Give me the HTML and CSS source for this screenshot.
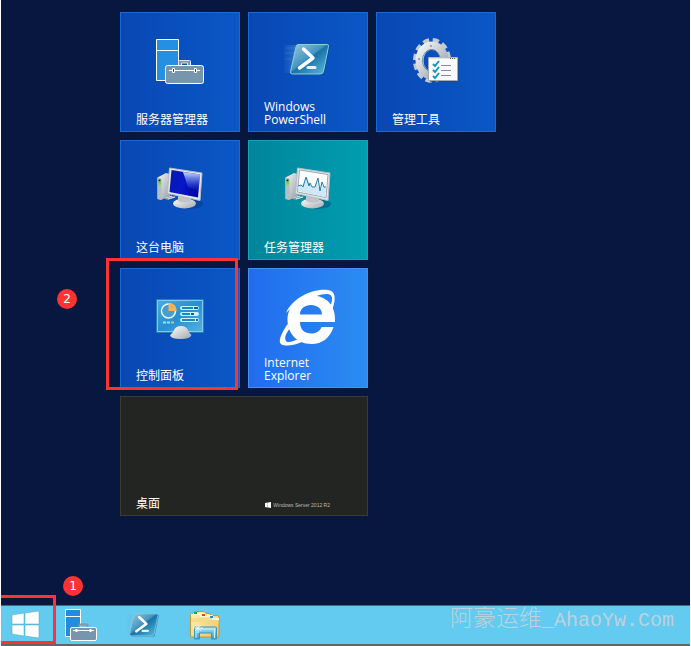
FILE: index.html
```html
<!DOCTYPE html>
<html lang="zh-CN">
<head>
<meta charset="utf-8">
<title>Windows Server</title>
<link rel="stylesheet" href="styles.css">
</head>
<body>
<svg class="defs" aria-hidden="true">
  <defs>
    <linearGradient id="ps" x1="0" y1="0" x2="1" y2="1"><stop offset="0" stop-color="#9ac9dc"/><stop offset=".45" stop-color="#4596c2"/><stop offset=".5" stop-color="#1773aa"/><stop offset="1" stop-color="#5fc0dc"/></linearGradient>
    <linearGradient id="trail"><stop offset="0" stop-color="#65aee5" stop-opacity=".1"/><stop offset="1" stop-color="#75b9df" stop-opacity=".75"/></linearGradient>
    <linearGradient id="metal" x1="0" y1="0" x2="1" y2="1"><stop offset="0" stop-color="#f4f6f7"/><stop offset=".5" stop-color="#c4cbd1"/><stop offset="1" stop-color="#929ba4"/></linearGradient>
    <linearGradient id="base" x1="0" y1="0" x2="1" y2="1"><stop offset="0" stop-color="#fff"/><stop offset="1" stop-color="#a3a7ab"/></linearGradient>
    <linearGradient id="screen" x1="0" y1="0" x2="1" y2=".3"><stop offset="0" stop-color="#0619a8"/><stop offset=".5" stop-color="#0817c8"/><stop offset="1" stop-color="#0009a8"/></linearGradient>
    <linearGradient id="shine" x1="0" y1="0" x2="0" y2="1"><stop offset="0" stop-color="#cbdcff"/><stop offset="1" stop-color="#315be4" stop-opacity="0"/></linearGradient>
    <linearGradient id="panel" x1="0" y1="0" x2="1" y2="1"><stop offset="0" stop-color="#4eaddd"/><stop offset=".5" stop-color="#278fd1"/><stop offset="1" stop-color="#54b5e4"/></linearGradient>
    <linearGradient id="folder" x1="0" y1="0" x2="1" y2="1"><stop offset="0" stop-color="#fff2b5"/><stop offset="1" stop-color="#edc763"/></linearGradient>
    <linearGradient id="glass" x1="0" y1="0" x2="0" y2="1"><stop offset="0" stop-color="#a9e0f5"/><stop offset="1" stop-color="#3e9ccc"/></linearGradient>
  </defs>
  <symbol id="powershell" viewBox="0 0 64 64">
    <path d="M8 17h15l-8 28H8z" fill="url(#trail)" opacity=".5"/>
    <path d="M10 20h9M9 25h9M9 31h7" stroke="#83bdea" stroke-opacity=".2"/>
    <path d="M23 18h31l-6 29H17z" fill="#063d85" opacity=".5"/>
    <path d="M22 16.500h29q2 0 1.500 2l-5 25q-.5 2.500-3 2.500h-28q-2.500 0-2-2.500l5.500-24.500q.5-2.500 2-2.500z" fill="url(#ps)" stroke="#8bd0dd"/>
    <path d="M27.500 21 37 30 23.500 40" fill="none" stroke="#fff" stroke-width="3.500" stroke-linecap="round" stroke-linejoin="round"/>
    <path d="M32 39.500h7" stroke="#e3f5fa" stroke-width="3" stroke-linecap="round"/>
  </symbol>
  <symbol id="computer" viewBox="0 0 64 64">
    <ellipse cx="41" cy="48" rx="14" ry="5" fill="#002f68" opacity=".35"/>
    <path d="M16 42l8-2 4 1-9 3z" fill="#8b9298"/>
    <path d="M17 42l7-2M20 43l7-2" stroke="#eee"/>
    <path d="M9.500 21.500 18 17l4 1v22l-9 4-3.500-1z" fill="url(#metal)"/>
    <path d="M13.500 22.500v21L9.500 43V21.500z" fill="#b8bdc0"/>
    <path d="M10.500 23.500h2v2h-2z" fill="#222"/><path d="M10.500 25.500h2.500v3h-2.500z" fill="#62df16"/>
    <path d="M32 40l10 1 1 6-12 1z" fill="#aeb5bc"/>
    <ellipse cx="36.500" cy="47.500" rx="11.500" ry="5" fill="url(#base)"/>
    <path d="M30 45q7 3 13 0v-4l-13-2z" fill="#bfc5ca"/>
    <path d="m21.500 12 32.500 5-2 27.500-32.500-7z" fill="#e6e8e9" stroke="#b6bcc1"/>
  </symbol>
</svg>

<main class="start">
  <div class="tiles">
    <a class="tile" href="#server-manager">
      <svg class="tile-icon" viewBox="0 0 64 64" aria-hidden="true">
        <path d="M8.500 11.500h22v41h-22zM8.500 22.500h22" fill="#2590e2" stroke="#fff"/>
        <path d="M30.500 37v-3.500q0-1 1-1h10q1 0 1 1V37" fill="#7899ae" stroke="#dce6ee"/><path d="M33.500 37v-2h6v2" fill="#0b53bd" stroke="#dce6ee"/>
        <rect x="17.500" y="37.500" width="38" height="18" rx="2" fill="#7596ac" stroke="#fff"/>
        <path d="M21 42.500h31" stroke="#fff"/><path d="M24.500 40.500h2v4h-2zM46.500 40.500h2v4h-2z" fill="#0b53bd" stroke="#fff"/>
      </svg>
      <span class="tile-label">服务器管理器</span>
    </a>
    <a class="tile" href="#powershell">
      <svg class="tile-icon" aria-hidden="true"><use href="#powershell"/></svg>
      <span class="tile-label">Windows<br>PowerShell</span>
    </a>
    <a class="tile" href="#tools">
      <svg class="tile-icon" viewBox="0 0 64 64" aria-hidden="true">
        <ellipse cx="28" cy="32.500" rx="16.500" ry="20" fill="none" stroke="#c3cad1" stroke-width="5" stroke-dasharray="6 3.600"/>
        <ellipse cx="28" cy="32.500" rx="12.500" ry="15" fill="none" stroke="url(#metal)" stroke-width="8"/>
        <ellipse cx="27.500" cy="32.500" rx="9" ry="11" fill="none" stroke="#71899e"/>
        <circle cx="27" cy="18" r="1" fill="#8296a8"/><circle cx="15" cy="31" r="1" fill="#8296a8"/>
        <path d="M26 31h29v23.500H26z" fill="#234978" opacity=".6"/>
        <path d="M24.500 29.500h29v23h-29z" fill="#f8fafc" stroke="#a6a9ad"/><path d="M25 30h28" stroke="#c8cdd2"/><path d="M46 30.500h6" stroke="#555" stroke-dasharray="1 1"/>
        <path d="m29 36 2 2 4-5M29 42l2 2 4-5M29 48l2 2 4-5" fill="none" stroke="#1797bf" stroke-width="2"/>
        <path d="M37 37.500h10M37 42.500h10M37 47.500h10" stroke="#8d86ad"/>
      </svg>
      <span class="tile-label">管理工具</span>
    </a>
    <a class="tile first" href="#computer">
      <svg class="tile-icon" viewBox="0 0 64 64" aria-hidden="true">
        <use href="#computer"/>
        <path d="M23.500 14 52 18.500l-2 23L21.500 36z" fill="url(#screen)"/>
        <path d="m35 16 17 2.500-1 17L40 31z" fill="url(#shine)"/>
      </svg>
      <span class="tile-label">这台电脑</span>
    </a>
    <a class="tile teal" href="#task-manager">
      <svg class="tile-icon" viewBox="0 0 64 64" aria-hidden="true">
        <use href="#computer"/>
        <path d="M23.500 14 52 18.500l-2 23L21.500 36z" fill="#fafdff" stroke="#9caab3"/>
        <path d="m22 30 5-2 4-7 4 10 3 1 3-7 3 11 3-7 3 3-1 9-27-6z" fill="#cee8f7"/>
        <path d="m22 30 3-1 2 2 3-10 3 9 1-3 2 4h3l3-9 2 13 2-9 2 5h2" fill="none" stroke="#237caa"/>
      </svg>
      <span class="tile-label">任务管理器</span>
    </a>
    <a class="tile first" href="#control-panel">
      <svg class="tile-icon" viewBox="0 0 64 64" aria-hidden="true">
        <path d="M8.500 15.500h47v33h-47z" fill="url(#panel)" stroke="#267fb5"/><path d="M9.500 16.500h45v31h-45z" fill="none" stroke="#81c9e9"/>
        <circle cx="20.500" cy="27" r="7" fill="#439fd4" stroke="#e8f8ff" stroke-width="1.500"/><path d="M20.500 27v-8q8 0 8 8z" fill="#ffb24c"/>
        <path d="M34 24h15M34 30h15M34 36h15" stroke="#c6f3ff" stroke-width="4" stroke-linecap="round"/>
        <path d="M34 24h11M34 30h8M34 36h13" stroke="#118bc2" stroke-width="2"/><path d="M46 24h4M43 30h3M48 36h2" stroke="#175b9e" stroke-width="2"/>
        <path d="M15 38.500h3M19 38.500h3" stroke="#8be8ff" stroke-width="2"/><path d="M23 38.500h3" stroke="#ffb24c" stroke-width="2"/>
        <path d="M22 51q3-2 4-5 2-4 7-4t7 4q1 3 3.500 5-1 4-11 4T22 51z" fill="url(#base)"/>
      </svg>
      <span class="tile-label">控制面板</span>
      <span class="highlight"></span>
      <span class="badge badge-tile">2</span>
    </a>
    <a class="tile azure" href="#ie">
      <svg class="tile-icon" viewBox="0 0 64 64" aria-hidden="true">
        <path fill="#fff" fill-rule="evenodd" d="M59 38H24c0 8 5 11.500 11.500 11.500 5 0 8.500-2.500 10-6.500h12C54 54 46 60 35.500 60 21 60 11.500 49 11.500 36s10-24.500 24-24.500C51 11.500 60 22 59 38zM24 30.500h22c0-6-5-9.500-11-9.500s-11 3.500-11 9.500z"/>
        <path fill="#fff" d="M10 29C17 13 38 4 52 6c8 1 8 9 4.500 19l-2-3c2.500-7 2.500-12-3.500-12-5 0-10 1.500-15 4-8 1-17 6-26 15z"/>
        <path fill="#fff" d="M11.500 40C5 50 1.500 58 5.500 60.500c5 2.500 15 .5 23-4l-4-3C17 58 11.500 59 10 57c-2-3 0-8 3.500-12z"/>
      </svg>
      <span class="tile-label">Internet<br>Explorer</span>
    </a>
    <a class="tile desktop" href="#desktop">
      <span class="tile-label">桌面</span>
      <span class="edition">
        <svg class="edition-logo" viewBox="0 0 27 27" aria-hidden="true"><path fill="#fff" d="M0 4l12-2v11H0zM13 2l14-2v13H13zM0 14h12v11L0 23zM13 14h14v13l-14-2z"/></svg>
        <span>Windows Server 2012 R2</span>
      </span>
    </a>
  </div>
</main>

<footer class="taskbar">
  <button class="start-button" type="button" aria-label="开始">
    <svg class="start-logo" viewBox="0 0 27 27" aria-hidden="true"><path fill="#fff" stroke="#4da5be" stroke-width=".5" d="M0 4l12-2v11H0zM13 2l14-2v13H13zM0 14h12v11L0 23zM13 14h14v13l-14-2z"/></svg>
    <span class="badge badge-start">1</span>
  </button>
  <button class="task" type="button" aria-label="服务器管理器">
    <svg class="task-icon" viewBox="0 0 32 32" aria-hidden="true">
      <path d="M.5.500h15v27H.500zM.5 7.500h15" fill="#218ddd" stroke="#fff"/>
      <path d="M14.500 18v-2.500h8V18" fill="none" stroke="#8498a5" stroke-width="2"/>
      <rect x="5.500" y="18.500" width="26" height="13" rx="1.500" fill="#7596ac" stroke="#fff"/>
      <path d="M8 21.500h21" stroke="#fff"/><path d="M11.500 20v3M25.500 20v3" stroke="#fff" stroke-width="2"/>
    </svg>
  </button>
  <button class="task" type="button" aria-label="Windows PowerShell">
    <svg class="task-icon" viewBox="11 10 43 43" aria-hidden="true"><use href="#powershell" width="64" height="64"/></svg>
  </button>
  <button class="task" type="button" aria-label="文件资源管理器">
    <svg class="task-icon" viewBox="0 0 32 32" aria-hidden="true">
      <path d="M1.500 28V5.500l1-1H4l1-2h10l2 2h4l1 2h7l1 2V28z" fill="url(#folder)" stroke="#c4963b"/>
      <path d="M4 5h11l2 2h-3M11 7h12l1 3h6" fill="none" stroke="#fff8d6" stroke-width="2"/>
      <path d="M5 4h3" stroke="#16a643" stroke-width="2"/><path d="M13 6h3" stroke="#d84533" stroke-width="2"/><path d="M21 8h3" stroke="#238bd7" stroke-width="2"/>
      <path d="M2 10h16l2 2h10M2 12h15l2 2h11" fill="none" stroke="#efd27a"/>
      <path d="M5.500 30V19q0-1 1-1h20q1 0 1 1v11h-5v-6h-12v6z" fill="url(#glass)" stroke="#3b94bd"/>
      <path d="M7 20h19M7 20v9M25.500 20v9" stroke="#c8f1ff"/>
      <path d="M9 14v10M4 19h10M6 16l6 6M12 16l-6 6" stroke="#fff" stroke-width=".7"/>
    </svg>
  </button>
  <p class="watermark"><span class="watermark-name">阿豪运维</span>_AhaoYw.Com</p>
</footer>
</body>
</html>
```

FILE: styles.css
```css
* { box-sizing: border-box; }

body {
  display: flex;
  flex-direction: column;
  min-height: 100vh;
  margin: 0;
  border-right: 1px solid #fff;
  border-left: 1px solid #fff;
  background: #071740;
  color: #fff;
  font: 12px/13px "Open Sans", "Noto Sans CJK SC", sans-serif;
}

.defs { position: absolute; width: 0; height: 0; }

.start { flex: 1; padding: 12px 0 12px 119px; }

.tiles {
  display: grid;
  grid-template-columns: repeat(3, 120px);
  grid-auto-rows: 120px;
  gap: 8px;
}

.tile {
  position: relative;
  display: flex;
  flex-direction: column;
  justify-content: space-between;
  padding: 15px 15px 5px;
  border: 1px solid #1f68cc;
  background: linear-gradient(to right, #0947b4, #0958c6);
  color: #fff;
  text-decoration: none;
}

.first { grid-column: 1; }
.teal { border-color: #18a4b3; background: linear-gradient(to right, #01849c, #009eaf); }
.azure { border-color: #4690f3; background: linear-gradient(to right, #216cee, #2b8cf2); }

.desktop {
  grid-column: 1 / span 2;
  flex-direction: row;
  align-items: flex-end;
  border-color: #3a3d37;
  background: #232522;
}

.tile-icon { align-self: center; width: 64px; height: 64px; }

.edition {
  display: flex;
  align-items: center;
  gap: 2px;
  margin-right: 22px;
  color: #bbb;
  font: 5px/10px "Liberation Sans", sans-serif;
  white-space: nowrap;
}

.edition-logo { width: 6px; height: 6px; }

.highlight {
  position: absolute;
  top: -11px;
  left: -15px;
  width: 132px;
  height: 132px;
  border: 3px solid #ff3432;
}

.badge {
  position: absolute;
  width: 20px;
  height: 20px;
  border-radius: 50%;
  background: #ff3432;
  color: #fff;
  font: 12px/20px "DejaVu Sans", sans-serif;
  text-align: center;
}

.badge-tile { top: 20px; left: -64px; }
.badge-start { top: -22px; left: 62px; }

.taskbar {
  display: flex;
  align-items: center;
  height: 41px;
  border-top: 1px solid #4d6580;
  border-bottom: 2px solid #626669;
  background: #63caf0;
}

.start-button {
  position: relative;
  align-self: flex-end;
  display: flex;
  align-items: center;
  width: 55px;
  height: 49px;
  padding: 10px 0 0 11px;
  border: solid #ff3432;
  border-width: 3px 3px 3px 0;
  background: none;
}

.start-logo { width: 27px; height: 27px; overflow: visible; }

.task {
  display: flex;
  justify-content: center;
  width: 62px;
  padding: 0 12px 0 0;
  border: 0;
  background: none;
}

.task-icon { width: 32px; height: 32px; }

.watermark {
  margin: 0 16px 10px auto;
  color: #bcd3dd;
  font: 20px/24px "Liberation Mono", "Noto Sans CJK SC", monospace;
  white-space: nowrap;
}

.watermark-name { font-size: 23px; font-weight: 300; }
```
